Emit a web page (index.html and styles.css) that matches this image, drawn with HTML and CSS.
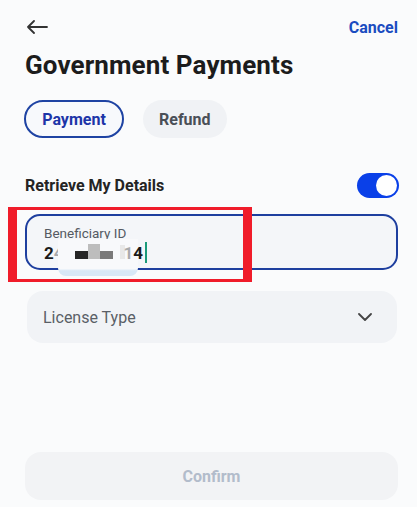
FILE: index.html
```html
<!DOCTYPE html>
<html lang="en">
<head>
  <meta charset="UTF-8">
  <title>Government Payments</title>
  <meta name="viewport" content="width=device-width, initial-scale=1.0">
  <link rel="stylesheet" href="styles.css">
</head>
<body>

  <div class="screen">
    <div class="topbar">
      <svg class="back" width="22" height="14" viewBox="0 0 22 14">
        <path d="M21 7H2M8 1L2 7l6 6" fill="none" stroke="#333" stroke-width="1.8" stroke-linecap="round" stroke-linejoin="round"/>
      </svg>
      <span class="cancel">Cancel</span>
    </div>

    <h1>Government Payments</h1>

    <div class="tabs">
      <span class="tab active">Payment</span>
      <span class="tab">Refund</span>
    </div>

    <div class="retrieve">
      <span>Retrieve My Details</span>
      <span class="toggle"><span class="knob"></span></span>
    </div>

    <div class="field-wrap">
      <div class="field">
        <div class="label">Beneficiary ID</div>
        <div class="value">2<span class="cut">4</span><span class="gap"></span><span class="tail"><span class="cut">1</span>4</span><span class="caret"></span></div>
      </div>
      <!-- pixelated mask over the hidden digits -->
      <div class="blur"></div>
      <span class="px m1"></span>
      <span class="px m2"></span>
      <span class="px m3"></span>
      <span class="px m4"></span>
      <div class="highlight"></div>
    </div>

    <div class="select">
      <span>License Type</span>
      <svg width="14" height="8" viewBox="0 0 14 8">
        <path d="M1 1l6 6 6-6" fill="none" stroke="#444" stroke-width="1.8" stroke-linecap="round" stroke-linejoin="round"/>
      </svg>
    </div>

    <div class="spacer"></div>

    <button class="confirm" type="button" disabled>Confirm</button>
  </div>

</body>
</html>
```

FILE: styles.css
```css
body {
  margin: 0;
  background: #fafbfc;
  font-family: Roboto, "Liberation Sans", Arial, sans-serif;
  color: #1f1f1f;
}
.screen { height: 507px; padding: 0 19px 7px 25px; box-sizing: border-box; display: flex; flex-direction: column; }
.topbar { display: flex; justify-content: space-between; align-items: center; height: 28px; padding-top: 13px; }
.back { margin-left: 1px; }
.cancel { color: #1a4cc0; font-weight: bold; font-size: 16px; }
h1 { margin: 9px 0 0; font-size: 26px; font-weight: bold; color: #1c1c1c; line-height: 30px; letter-spacing: 0.1px; }
.tabs { display: flex; gap: 19px; margin-top: 20px; }
.tab { display: flex; align-items: center; justify-content: center; height: 38px; padding: 0 16px; border-radius: 20px; background: #f0f2f5; font-size: 16px; font-weight: bold; color: #4a4f57; box-sizing: border-box; }
.tab.active { background: #f7f9fc; border: 2px solid #1e43a3; color: #1c35a8; width: 100px; margin-left: -1px; }
.retrieve { display: flex; justify-content: space-between; align-items: center; margin-top: 35px; font-size: 16px; font-weight: bold; color: #242424; }
.toggle { width: 42px; height: 25px; border-radius: 13px; background: #0a40e8; position: relative; margin-right: -1px; }
.knob { position: absolute; right: 2px; top: 2px; width: 21px; height: 21px; border-radius: 50%; background: #fff; }
.field-wrap { position: relative; margin-top: 16px; }
.field { height: 56px; border: 2px solid #1e3f9f; border-radius: 15px; background: #f4f6f9; box-sizing: border-box; padding: 9px 0 0 17px; }
.label { font-size: 13.5px; color: #555a62; line-height: 17px; }
.value { font-size: 17px; font-weight: bold; color: #1a1a1a; line-height: 20px; display: flex; align-items: center; }
.cut { opacity: 0.35; }
.gap { width: 60px; }
.tail { position: relative; z-index: 1; }
.caret { width: 2px; height: 21px; background: #1a9a7a; margin-left: 2px; }
.blur { position: absolute; left: 33px; top: 25px; width: 80px; height: 37px; border-radius: 0 0 8px 8px; background: linear-gradient(#f8f9fb 80%, #d8e8f6 86%); }
.px { position: absolute; }
.m1 { left: 50px; top: 37px; width: 13px; height: 8px; background: #262626; }
.m2 { left: 63px; top: 30px; width: 12px; height: 15px; background: #bdbdbd; }
.m3 { left: 75px; top: 37px; width: 13px; height: 8px; background: #7a7a7a; }
.m4 { left: 95px; top: 31px; width: 5px; height: 14px; background: #e8e8e8; }
.highlight { position: absolute; left: -17px; top: -7px; width: 226px; height: 69px; border: 3px solid #f01c2a; border-left-width: 9px; border-right-width: 9px; }
.select { display: flex; justify-content: space-between; align-items: center; height: 52px; margin: 21px 1px 0 2px; padding: 0 25px 0 16px; border-radius: 16px; background: #f1f3f6; font-size: 16px; color: #5a5f66; }
.spacer { flex: 1; }
.confirm { height: 48px; width: 100%; border: none; border-radius: 16px; background: #f2f3f5; color: #b2bccb; font-size: 16px; font-weight: bold; font-family: inherit; }
```
